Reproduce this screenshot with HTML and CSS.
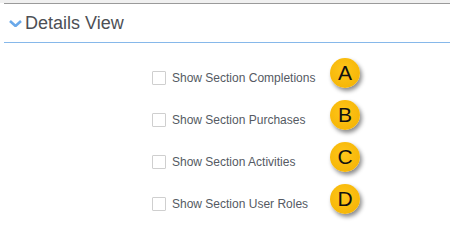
FILE: index.html
```html
<!DOCTYPE html>
<html lang="en">
<head>
  <meta charset="UTF-8">
  <title>Details View</title>
  <link rel="stylesheet" href="styles.css">
</head>
<body>
  <div class="top-band"></div>
  <div class="panel">
    <h2 class="panel-title">
      <svg class="chevron" width="13" height="7" viewBox="0 0 13 7">
        <path d="M1 1 L6.5 6 L12 1" fill="none" stroke="#6aa9ea" stroke-width="2.6" stroke-linejoin="miter"/>
      </svg>
      Details View
    </h2>
    <div class="options">
      <div class="option">
        <label class="check"><span class="box"></span>Show Section Completions</label>
        <span class="badge">A</span>
      </div>
      <div class="option">
        <label class="check"><span class="box"></span>Show Section Purchases</label>
        <span class="badge">B</span>
      </div>
      <div class="option">
        <label class="check"><span class="box"></span>Show Section Activities</label>
        <span class="badge">C</span>
      </div>
      <div class="option">
        <label class="check"><span class="box"></span>Show Section User Roles</label>
        <span class="badge">D</span>
      </div>
    </div>
  </div>
</body>
</html>
```

FILE: styles.css
```css
body {
  margin: 0;
  font-family: "Liberation Sans", Arial, sans-serif;
  background: #fff;
  width: 450px;
  height: 236px;
  overflow: hidden;
}
.top-band {
  height: 3px;
  background: #f0f0f0;
}
.panel {
  margin-left: 4px;
  border-top: 1px solid #9a9a9a;
}
.panel-title {
  margin: 0;
  height: 38px;
  display: flex;
  align-items: center;
  padding-left: 5px;
  font-size: 18px;
  font-weight: normal;
  color: #4d4f55;
  border-bottom: 1px solid #86b8ea;
}
.chevron {
  margin-right: 3px;
  margin-top: 1px;
}
.options {
  padding-top: 14px;
  padding-left: 148px;
}
.option {
  height: 42px;
  display: flex;
  align-items: flex-start;
}
.check {
  width: 178px;
  display: flex;
  align-items: center;
  height: 14px;
  margin-top: 14px;
  font-size: 12px;
  color: #555a63;
}
.box {
  width: 12px;
  height: 12px;
  border: 1px solid #cfcfcf;
  border-radius: 1px;
  background: #fff;
  margin-right: 6px;
}
.badge {
  width: 30px;
  height: 30px;
  margin-top: 1px;
  border-radius: 50%;
  background: radial-gradient(circle at 45% 40%, #ffc61a, #f2b000);
  box-shadow: 2px 3px 4px rgba(0, 0, 0, 0.45);
  display: flex;
  align-items: center;
  justify-content: center;
  font-size: 21px;
  color: #111;
}
```
